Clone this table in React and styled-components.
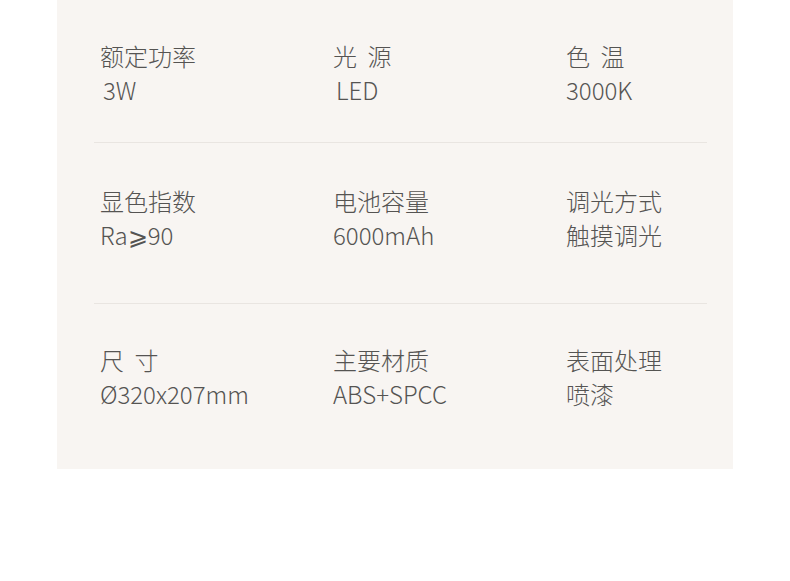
import React from 'react';
import styled, {createGlobalStyle} from 'styled-components';

const GlobalStyle = createGlobalStyle`
    html, body {
        margin: 0;
        padding: 0;
        background: #ffffff;
    }
    body {
        font-family: "Noto Sans CJK SC", "Noto Sans", sans-serif;
    }
`;

const Page = styled.div`
    width: 790px;
    height: 581px;
    padding-left: 57px;
    box-sizing: border-box;
`;

const Panel = styled.div`
    width: 676px;
    height: 469px;
    background: #f8f5f2;
    padding: 0 26px 0 37px;
    box-sizing: border-box;
    overflow: hidden;
`;

const Row = styled.div`
    display: grid;
    grid-template-columns: 233px 233px 1fr;
    padding: ${props => props.pad};
    border-bottom: ${props => props.last ? 'none' : '1px solid #e9e5e1'};
`;

const Cell = styled.div`
    display: flex;
    flex-direction: column;
    padding-left: 6px;
`;

const Label = styled.div`
    font-size: 24px;
    line-height: 34px;
    color: #555452;
    font-weight: 300;
    white-space: pre;
`;

const Value = styled.div`
    font-size: 24px;
    line-height: 34px;
    color: #555452;
    font-weight: 300;
    white-space: pre;
    padding-left: ${props => props.indent || 0}px;
`;

const rows = [
    {pad: '39px 0 35px', items: [['额定功率', '3W', 3], ['光  源', 'LED', 3], ['色  温', '3000K', 0]]},
    {pad: '41px 0 51px', items: [['显色指数', 'Ra⩾90', 0], ['电池容量', '6000mAh', 0], ['调光方式', '触摸调光', 0]]},
    {pad: '39px 0 58px', items: [['尺  寸', 'Ø320x207mm', 0], ['主要材质', 'ABS+SPCC', 0], ['表面处理', '喷漆', 0]]},
];

function App() {
    return (
        <Page>
            <GlobalStyle />
            <Panel>
                {rows.map((row, i) => (
                    <Row key={i} pad={row.pad} last={i === rows.length - 1}>
                        {row.items.map(([label, value, indent]) => (
                            <Cell key={label}>
                                <Label>{label}</Label>
                                <Value indent={indent}>{value}</Value>
                            </Cell>
                        ))}
                    </Row>
                ))}
            </Panel>
        </Page>
    );
}

export default App;
